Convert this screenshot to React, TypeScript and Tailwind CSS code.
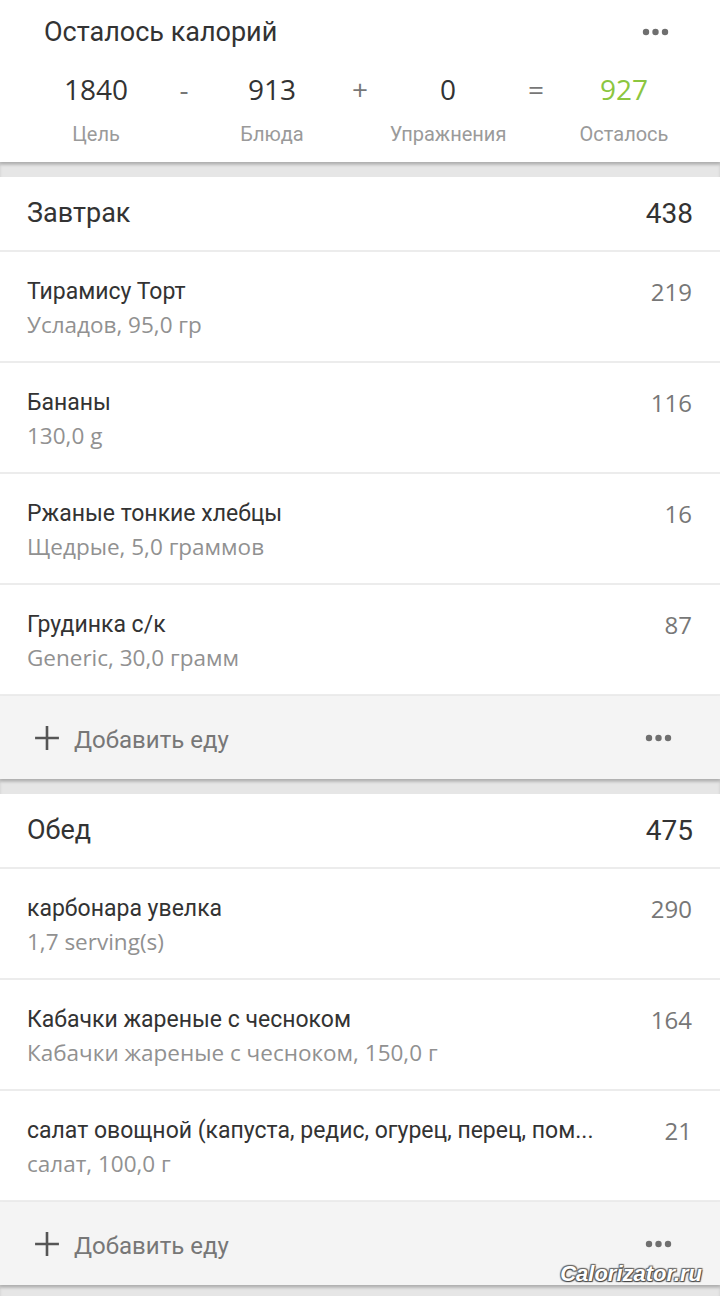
import React from 'react';

type Food = { name: string; sub: string; kcal: number };

const breakfast: Food[] = [
  { name: 'Тирамису Торт', sub: 'Усладов, 95,0 гр', kcal: 219 },
  { name: 'Бананы', sub: '130,0 g', kcal: 116 },
  { name: 'Ржаные тонкие хлебцы', sub: 'Щедрые, 5,0 граммов', kcal: 16 },
  { name: 'Грудинка с/к', sub: 'Generic, 30,0 грамм', kcal: 87 },
];

const lunch: Food[] = [
  { name: 'карбонара увелка', sub: '1,7 serving(s)', kcal: 290 },
  { name: 'Кабачки жареные с чесноком', sub: 'Кабачки жареные с чесноком, 150,0 г', kcal: 164 },
  { name: 'салат овощной (капуста, редис, огурец, перец, пом...', sub: 'салат, 100,0 г', kcal: 21 },
];

function Dots() {
  return (
    <svg width="27" height="8" viewBox="0 0 27 8" className="text-[#6f6f6f]">
      <circle cx="4" cy="4" r="3.2" fill="currentColor" />
      <circle cx="13.5" cy="4" r="3.2" fill="currentColor" />
      <circle cx="23" cy="4" r="3.2" fill="currentColor" />
    </svg>
  );
}

function Separator() {
  return <div className="h-[15px] bg-[#e6e6e6] shadow-[inset_0_3px_3px_rgba(0,0,0,0.12)]" />;
}

function FoodRow({ food }: { food: Food }) {
  return (
    <div className="h-[111px] border-b-2 border-[#ececec] pl-[27px] pr-[28px] pt-[26px] flex">
      <div className="flex-1 min-w-0 pr-[30px]">
        <div className="text-[23px] leading-[28px] text-[#333] whitespace-nowrap">{food.name}</div>
        <div className="text-[22.5px] leading-[28px] text-[#919191] mt-[5px] whitespace-nowrap font-['Open_Sans']">
          {food.sub}
        </div>
      </div>
      <div className="text-[24px] leading-[28px] text-[#777] font-['Open_Sans']">{food.kcal}</div>
    </div>
  );
}

function Meal({ title, total, foods }: { title: string; total: number; foods: Food[] }) {
  return (
    <section className="bg-white">
      <div className="h-[75px] border-b-2 border-[#ececec] px-[27px] flex items-center justify-between">
        <span className="text-[27px] text-[#333]">{title}</span>
        <span className="text-[28px] text-[#333]">{total}</span>
      </div>
      {foods.map((f) => (
        <FoodRow key={f.name} food={f} />
      ))}
      <div className="h-[83px] bg-[#f4f4f4] pl-[34px] pr-[48px] flex items-center justify-between shadow-[0_2px_3px_rgba(0,0,0,0.15)] relative">
        <div className="flex items-center gap-[14px]">
          <svg width="26" height="26" viewBox="0 0 24 24" className="text-[#555]">
            <path d="M12 1v22M1 12h22" stroke="currentColor" strokeWidth="2.4" />
          </svg>
          <span className="text-[24px] text-[#777] mt-[4px]">Добавить еду</span>
        </div>
        <Dots />
      </div>
    </section>
  );
}

const cols = [
  { v: '1840', l: 'Цель' },
  { v: '-', op: true },
  { v: '913', l: 'Блюда' },
  { v: '+', op: true },
  { v: '0', l: 'Упражнения' },
  { v: '=', op: true },
  { v: '927', l: 'Осталось', green: true },
];

export default function App() {
  return (
    <div
      className="w-[720px] h-[1296px] overflow-hidden bg-[#e6e6e6] relative"
      style={{ fontFamily: 'Roboto, "Noto Sans", sans-serif' }}
    >
      {/* Summary */}
      <div className="bg-white h-[162px] shadow-[0_2px_3px_rgba(0,0,0,0.15)] relative z-10">
        <div className="flex items-center justify-between pl-[44px] pr-[51px] pt-[12px]">
          <span className="text-[27px] text-[#333]">Осталось калорий</span>
          <Dots />
        </div>
        <div className="grid grid-cols-7 px-[52px] mt-[20px]">
          {cols.map((c, i) => (
            <div key={i} className="flex flex-col items-center">
              <span
                className={
                  'text-[28px] leading-[32px] font-[\'Open_Sans\'] ' +
                  (c.green ? 'text-[#8cc63f]' : c.op ? 'text-[#777]' : 'text-[#333]')
                }
              >
                {c.v}
              </span>
              {c.l && <span className="text-[20px] text-[#9a9a9a] mt-[14px] whitespace-nowrap">{c.l}</span>}
            </div>
          ))}
        </div>
      </div>
      <Separator />
      <Meal title="Завтрак" total={438} foods={breakfast} />
      <Separator />
      <Meal title="Обед" total={475} foods={lunch} />
      <Separator />

      <div className="absolute right-[18px] bottom-[6px] z-20 text-[22px] font-bold italic text-white font-['Liberation_Sans'] [text-shadow:1px_1px_1px_#444,-1px_-1px_1px_#666,1px_-1px_1px_#666,-1px_1px_1px_#666]">
        Calorizator.ru
      </div>
    </div>
  );
}
